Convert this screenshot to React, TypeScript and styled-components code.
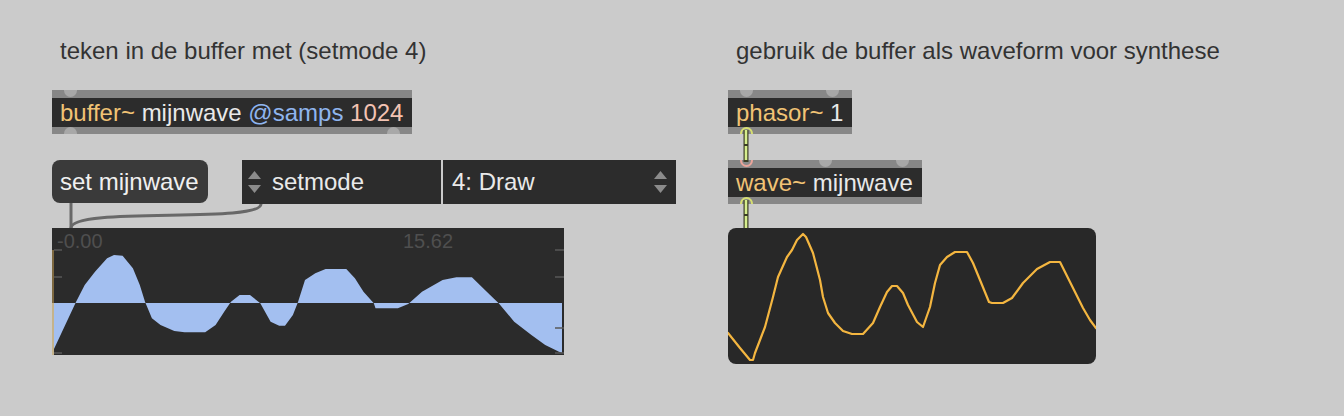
import React from 'react';
import styled, { createGlobalStyle } from 'styled-components';

const GlobalStyle = createGlobalStyle`
  html, body { margin: 0; padding: 0; background: #cbcbcb; }
  body { font-family: "Liberation Sans", Arial, sans-serif; }
  #root { width: 1344px; height: 416px; }
`;

const Canvas = styled.div`
  position: relative;
  width: 1344px;
  height: 416px;
  background: #cbcbcb;
  overflow: hidden;
  font-family: "Liberation Sans", Arial, sans-serif;
`;

const Comment = styled.div<{ $x: number; $y: number }>`
  position: absolute;
  left: ${(p) => p.$x}px;
  top: ${(p) => p.$y}px;
  font-size: 24px;
  line-height: 28px;
  color: #333333;
  white-space: nowrap;
`;

const ObjBox = styled.div<{ $x: number; $y: number; $w: number }>`
  position: absolute;
  left: ${(p) => p.$x}px;
  top: ${(p) => p.$y}px;
  width: ${(p) => p.$w}px;
  display: flex;
  flex-direction: column;
  overflow: hidden;
`;

const PortStrip = styled.div<{ $h: number }>`
  position: relative;
  height: ${(p) => p.$h}px;
  background: #878787;
  overflow: hidden;
`;

const ObjBody = styled.div`
  height: 29px;
  background: #2c2c2c;
  padding: 0 8px;
  font-size: 24px;
  line-height: 29px;
  white-space: nowrap;
  color: #e9e9e9;
`;

const Port = styled.span<{ $left?: number; $right?: number; $edge: 'top' | 'bottom'; $ring?: string }>`
  position: absolute;
  box-sizing: border-box;
  width: 13px;
  height: 13px;
  border-radius: 50%;
  ${(p) => (p.$left !== undefined ? `left: ${p.$left}px;` : `right: ${p.$right}px;`)}
  ${(p) => (p.$edge === 'top' ? 'top: -6px;' : 'bottom: -6px;')}
  background: ${(p) => (p.$ring ? '#8a8a8a' : '#a8a8a8')};
  border: ${(p) => (p.$ring ? `2px solid ${p.$ring}` : 'none')};
`;

const tokenColors: Record<string, string> = {
  cls: '#f1c375',
  arg: '#e9e9e9',
  attr: '#8fb5ef',
  num: '#f3c3b3',
};

const Token = styled.span<{ $kind: string }>`
  color: ${(p) => tokenColors[p.$kind]};
`;

const MessageBox = styled.div<{ $x: number; $y: number; $w: number }>`
  position: absolute;
  left: ${(p) => p.$x}px;
  top: ${(p) => p.$y}px;
  width: ${(p) => p.$w}px;
  height: 43px;
  box-sizing: border-box;
  padding: 0 8px;
  background: #3a3a3a;
  border-radius: 8px;
  color: #f0f0f0;
  font-size: 24px;
  line-height: 43px;
  white-space: nowrap;
`;

const UMenu = styled.div<{ $x: number; $y: number; $w: number; $arrowRight?: boolean }>`
  position: absolute;
  left: ${(p) => p.$x}px;
  top: ${(p) => p.$y}px;
  width: ${(p) => p.$w}px;
  height: 44px;
  box-sizing: border-box;
  background: #2c2c2c;
  display: flex;
  align-items: center;
  flex-direction: ${(p) => (p.$arrowRight ? 'row-reverse' : 'row')};
  justify-content: ${(p) => (p.$arrowRight ? 'space-between' : 'flex-start')};
  padding: ${(p) => (p.$arrowRight ? '0 8px 0 9px' : '0 0 0 5px')};
  gap: 10px;
`;

const UMenuLabel = styled.span`
  color: #e9e9e9;
  font-size: 24px;
  line-height: 44px;
  white-space: nowrap;
`;

const Arrows = () => (
  <svg width="15" height="24" viewBox="0 0 15 24">
    <polygon points="7.5,1 14,9 1,9" fill="#8b8b8b" />
    <polygon points="1,15 14,15 7.5,23" fill="#8b8b8b" />
  </svg>
);

const WaveDisplay = styled.div<{ $x: number; $y: number }>`
  position: absolute;
  left: ${(p) => p.$x}px;
  top: ${(p) => p.$y}px;
  width: 512px;
  height: 127px;
  background: #2b2b2b;
  overflow: hidden;
`;

const WaveLabel = styled.span<{ $x: number }>`
  position: absolute;
  left: ${(p) => p.$x}px;
  top: 3px;
  font-size: 20px;
  line-height: 20px;
  color: #4f4f4f;
  white-space: nowrap;
`;

const FullSvg = styled.svg`
  position: absolute;
  left: 0;
  top: 0;
`;

const PlotDisplay = styled.div<{ $x: number; $y: number }>`
  position: absolute;
  left: ${(p) => p.$x}px;
  top: ${(p) => p.$y}px;
  width: 368px;
  height: 136px;
  background: #282828;
  border-radius: 8px;
  overflow: hidden;
`;

const CordLayer = styled.svg`
  position: absolute;
  left: 0;
  top: 0;
  pointer-events: none;
`;

const wavePts: [number, number][] = [
  [0, 125.3], [24.1, 73.7], [32.7, 57], [43, 43.7], [55.1, 30.3], [62, 27], [70.6, 27.7],
  [80.9, 40.3], [87.8, 57], [93, 73.7], [99.9, 90.3], [108.5, 97], [122.3, 103], [132.6, 104.3],
  [153.2, 104.3], [163.6, 97], [172.2, 83.7], [179, 73.7], [187.6, 67], [198, 67], [208.3, 75.3],
  [218.6, 93.7], [227.2, 97.7], [233, 97.7], [240.9, 87], [246.1, 73.7], [253, 52], [263.3, 45.3],
  [273.6, 41], [294.3, 41], [302.9, 50.3], [311.5, 63.7], [321.8, 75.3], [323.5, 80.3],
  [345.9, 80.3], [356.2, 76], [370, 63.7], [390.6, 52], [404.4, 49.3], [419.9, 49.3], [438.1, 67],
  [446.7, 75.3], [462.2, 93.7], [479.4, 107], [493.2, 117], [507, 123.7], [510, 124.7],
];

const plotPts: [number, number][] = [
  [0, 105], [12, 120], [22, 132], [25, 132], [27, 125], [37, 99], [45, 69], [50, 49], [59, 29],
  [64, 22], [69, 12], [75, 6], [78, 9], [85, 25], [92, 52], [95, 69], [100, 85], [107, 95],
  [115, 103], [124, 106], [135, 106], [145, 95], [152, 79], [159, 64], [164, 58], [169, 58],
  [175, 65], [180, 77], [189, 94], [195, 99], [202, 79], [207, 55], [212, 37], [219, 29],
  [227, 24], [239, 24], [245, 35], [252, 52], [261, 74], [264, 75], [275, 75], [284, 70],
  [295, 55], [309, 41], [322, 34], [332, 34], [342, 54], [355, 80], [362, 92], [368, 100],
];

const CENTER = 75;
const waveFill =
  `M0,${CENTER} ` + wavePts.map(([x, y]) => `L${x},${y}`).join(' ') + ` L510,${CENTER} Z`;

const SignalCord = ({ x, y1, y2 }: { x: number; y1: number; y2: number }) => (
  <g>
    <line x1={x} y1={y1} x2={x} y2={y2} stroke="#3a3d24" strokeWidth={5} />
    <line x1={x} y1={y1} x2={x} y2={y2} stroke="#d6ee8e" strokeWidth={2.6} strokeDasharray="14 2" />
  </g>
);

export default function App() {
  return (
    <>
      <GlobalStyle />
      <Canvas>
        <Comment $x={60} $y={37}>teken in de buffer met (setmode 4)</Comment>
        <Comment $x={736} $y={37}>gebruik de buffer als waveform voor synthese</Comment>

        <ObjBox $x={52} $y={90} $w={360}>
          <PortStrip $h={8}>
            <Port $edge="top" $left={12} />
          </PortStrip>
          <ObjBody>
            <Token $kind="cls">buffer~</Token> <Token $kind="arg">mijnwave</Token>{' '}
            <Token $kind="attr">@samps</Token> <Token $kind="num">1024</Token>
          </ObjBody>
          <PortStrip $h={7}>
            <Port $edge="bottom" $left={12} />
            <Port $edge="bottom" $right={12} />
          </PortStrip>
        </ObjBox>

        <MessageBox $x={52} $y={160} $w={156}>set mijnwave</MessageBox>

        <UMenu $x={242} $y={160} $w={199}>
          <Arrows />
          <UMenuLabel>setmode</UMenuLabel>
        </UMenu>
        <UMenu $x={443} $y={160} $w={233} $arrowRight>
          <Arrows />
          <UMenuLabel>4: Draw</UMenuLabel>
        </UMenu>

        <WaveDisplay $x={52} $y={228}>
          <FullSvg width="512" height="127" viewBox="0 0 512 127">
            <path d={waveFill} fill="#a3bff0" />
            <line x1="1" y1="22" x2="1" y2={CENTER} stroke="#7d6840" strokeWidth={2} />
            <line x1="1" y1={CENTER} x2="1" y2="127" stroke="#c5b38b" strokeWidth={2} />
            <g stroke="#595959" strokeWidth={1.5}>
              <line x1="2" y1="22" x2="10" y2="22" />
              <line x1="2" y1="49" x2="10" y2="49" />
              <line x1="2" y1="125" x2="10" y2="125" />
              <line x1="503" y1="22" x2="512" y2="22" />
              <line x1="503" y1="49" x2="512" y2="49" />
              <line x1="503" y1="100" x2="512" y2="100" />
              <line x1="503" y1="125" x2="512" y2="125" />
            </g>
          </FullSvg>
          <WaveLabel $x={5}>-0.00</WaveLabel>
          <WaveLabel $x={351}>15.62</WaveLabel>
        </WaveDisplay>

        <ObjBox $x={728} $y={90} $w={124}>
          <PortStrip $h={8}>
            <Port $edge="top" $left={12} />
            <Port $edge="top" $right={13} />
          </PortStrip>
          <ObjBody>
            <Token $kind="cls">phasor~</Token> <Token $kind="arg">1</Token>
          </ObjBody>
          <PortStrip $h={7}>
            <Port $edge="bottom" $left={12} $ring="#d7df72" />
          </PortStrip>
        </ObjBox>

        <ObjBox $x={728} $y={160} $w={194}>
          <PortStrip $h={8}>
            <Port $edge="top" $left={12} $ring="#eaa49a" />
            <Port $edge="top" $left={91} />
            <Port $edge="top" $right={13} />
          </PortStrip>
          <ObjBody>
            <Token $kind="cls">wave~</Token> <Token $kind="arg">mijnwave</Token>
          </ObjBody>
          <PortStrip $h={7}>
            <Port $edge="bottom" $left={12} $ring="#d7df72" />
          </PortStrip>
        </ObjBox>

        <PlotDisplay $x={728} $y={228}>
          <FullSvg width="368" height="136" viewBox="0 0 368 136">
            <polyline
              points={plotPts.map(([x, y]) => `${x},${y}`).join(' ')}
              fill="none"
              stroke="#f4b640"
              strokeWidth={2.2}
              strokeLinejoin="round"
              strokeLinecap="round"
            />
          </FullSvg>
        </PlotDisplay>

        <CordLayer width="1344" height="416" viewBox="0 0 1344 416">
          <g fill="none" stroke="#686868" strokeWidth={3}>
            <line x1="71" y1="203" x2="71" y2="228" />
            <path d="M261,204 C261,224 71,206 71,228" />
          </g>
          <SignalCord x={746} y1={130} y2={162} />
          <SignalCord x={746} y1={200} y2={228} />
        </CordLayer>
      </Canvas>
    </>
  );
}
